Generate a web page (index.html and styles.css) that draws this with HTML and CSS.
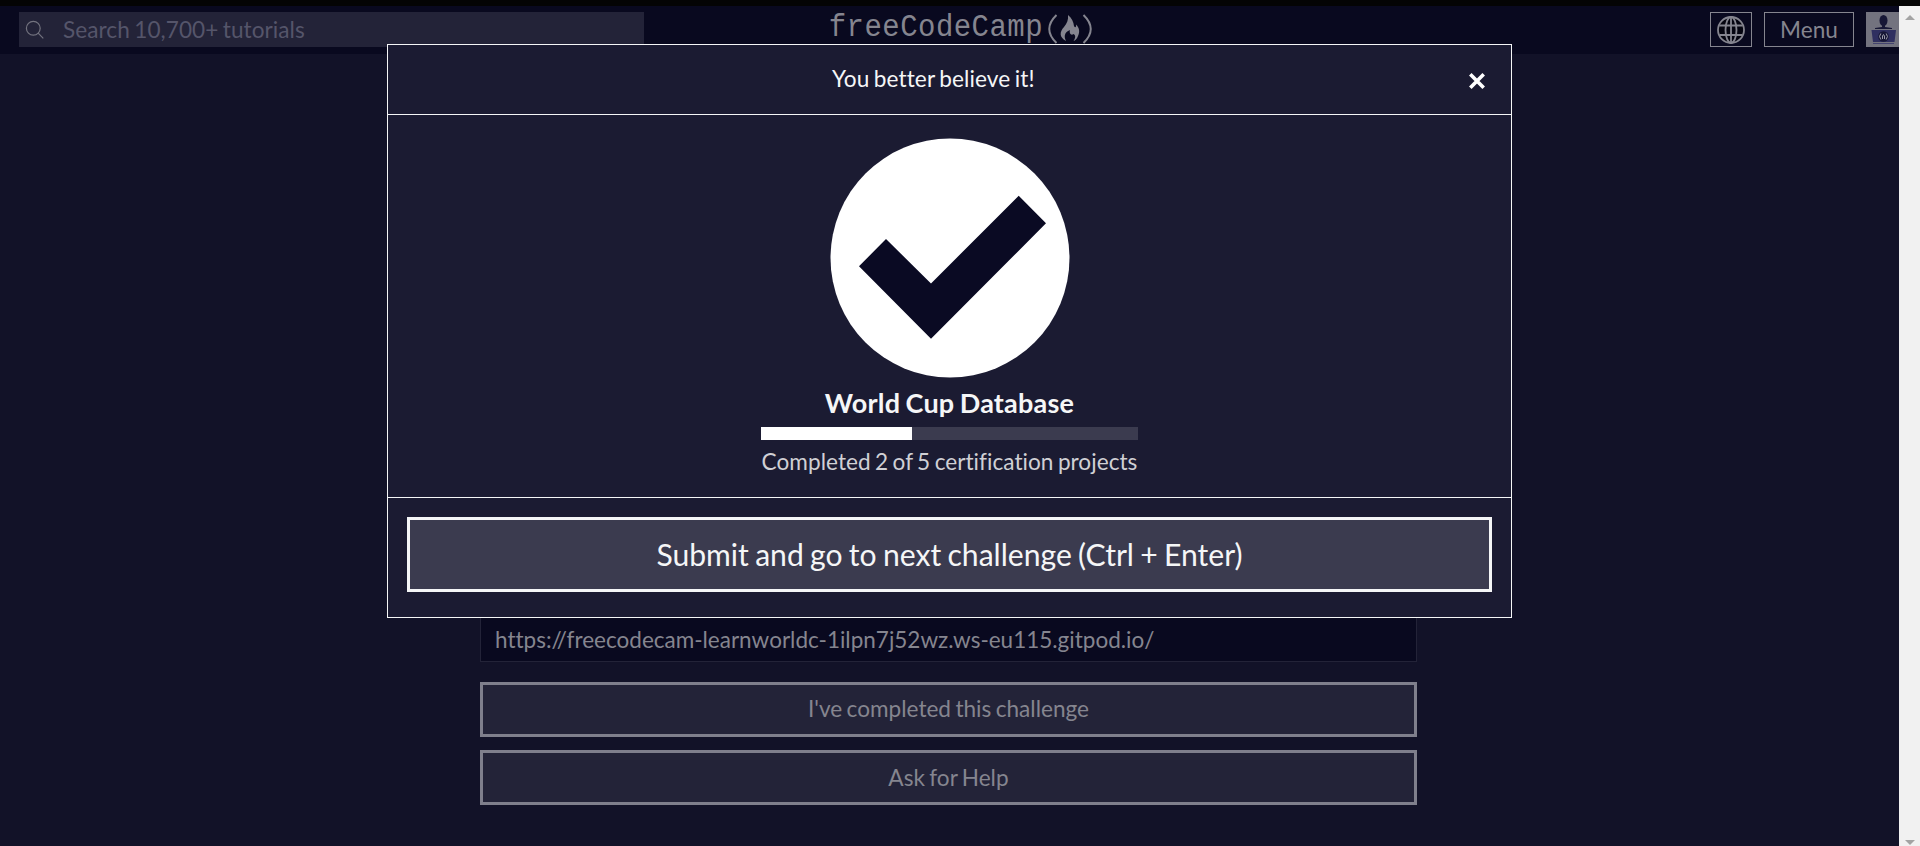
FILE: index.html
```html
<!DOCTYPE html>
<html lang="en">
<head>
<meta charset="utf-8">
<title>World Cup Database | freeCodeCamp.org</title>
<link rel="stylesheet" href="styles.css">
</head>
<body>
<div class="topline"></div>
<div class="viewport">
  <div class="page">
    <nav class="nav">
      <div class="search">
        <svg class="search-icon" width="20" height="20" viewBox="0 0 20 20"><circle cx="8.3" cy="8.3" r="6.9"/><path d="M13.2 13.2L18.3 18.3"/></svg>
        <span class="search-text">Search 10,700+ tutorials</span>
      </div>
      <div class="logo">
        <span class="logo-text">freeCodeCamp</span>
        <svg class="logo-mark" width="44" height="30" viewBox="0 0 44 30">
          <path class="paren" d="M8.500 1Q-6 15 8.500 29M35.500 1Q50 15 35.500 29"/>
          <path class="flame" d="M20 1C24 4 25.500 8 26 12C27 14 28.500 13.500 28 10.500C31.500 14 32 18 30 22C29 25 27 26.500 25.500 27C28 23.500 27.500 21 25.500 20C23 22 21 19 22 16C18 17.500 15 21 18 27C11 23 11.500 18 16 13C19 9.500 20.500 6 20 1Z"/>
        </svg>
      </div>
      <div class="actions">
        <div class="lang"><svg width="28" height="28" viewBox="0 0 28 28"><circle cx="14" cy="14" r="13"/><ellipse cx="14" cy="14" rx="5.500" ry="13"/><path d="M14 1V27M2.500 9.500H25.500M2.500 19H25.500"/></svg></div>
        <div class="menu">Menu</div>
        <div class="avatar"><svg width="33" height="35" viewBox="0 0 33 35">
          <ellipse class="person" cx="17.500" cy="8.500" rx="4" ry="5.500"/><path class="person" d="M16 13h3v2l7 1v1H9v-1l7-1z"/>
          <path class="laptop" d="M5.500 18H30L28.500 30H7Z"/><path class="base" d="M7 31.500H28"/><circle class="person" cx="17.500" cy="24.500" r="5.300"/><path class="mark" d="M14.800 21.500q-2.500 3 0 6M20.200 21.500q2.500 3 0 6M16.500 27v-3l1-1.500l1 1.500v3"/></svg></div>
      </div>
    </nav>
    <main class="content">
      <div class="field">https://freecodecam-learnworldc-1ilpn7j52wz.ws-eu115.gitpod.io/</div>
      <div class="btn btn-first">I've completed this challenge</div>
      <div class="btn">Ask for Help</div>
    </main>
    <section class="modal">
      <header class="modal-head"><span class="modal-title">You better believe it!</span>
        <svg class="close" width="18" height="18" viewBox="0 0 18 18"><path d="M2.300 2.300L15.700 15.700M15.700 2.300L2.300 15.700"/></svg></header>
      <div class="modal-body">
        <svg class="check" width="240" height="240" viewBox="0 0 240 240"><circle cx="120" cy="120" r="119.500"/><path d="M29 128.300L56 101L101 145.500L188.700 57.700L216 85.300L101 200.700Z"/></svg>
        <div class="project">World Cup Database</div>
        <div class="bar"><div class="fill" style="width:40%"></div></div>
        <div class="done">Completed 2 of 5 certi<span class="lig">fi</span>cation projects</div>
      </div>
      <footer class="modal-foot"><div class="submit">Submit and go to next challenge (Ctrl + Enter)</div></footer>
    </section>
  </div>
  <div class="scroll"><i class="up"></i><i class="down"></i></div>
</div>
</body>
</html>
```
FILE: styles.css
```css
* { box-sizing: border-box; }
body { margin: 0; height: 846px; overflow: hidden; display: flex; flex-direction: column; background: #121228; color: #85858f; font: 22.6px/34px Lato, sans-serif; font-variant-ligatures: none; word-spacing: -1.4px; }
svg { display: block; fill: none; }
.lig { font-variant-ligatures: normal; }
.topline { height: 6px; background: #040404; }
.viewport { flex: 1; display: flex; min-height: 0; }
.page { position: relative; width: 1899px; display: flex; flex-direction: column; justify-content: space-between; overflow: hidden; }
.nav { height: 48px; background: #09091f; display: grid; grid-template-columns: 625px 1fr 189px; padding: 6px 0 0 19px; }
.search { height: 35px; background: #232338; display: flex; align-items: center; padding-left: 6px; color: #55556a; }
.search-text { letter-spacing: .05px; }
.search-icon { stroke: #73737f; stroke-width: 1.2; margin-right: 18px; }
.logo { display: flex; justify-content: flex-end; padding-right: 618px; }
.logo-text { font: 29px/35px "Liberation Mono", monospace; letter-spacing: .45px; transform: scaleY(1.1); transform-origin: 0 80%; }
.logo-mark { margin: 2px 0 0 5px; }
.paren { stroke: #85858f; stroke-width: 2; }
.flame { fill: #85858f; }
.actions { display: flex; gap: 12px; }
.lang { width: 42px; height: 35px; border: 1px solid #85858f; display: grid; place-items: center; stroke: #85858f; stroke-width: 1.8; }
.lang circle { fill: #050510; }
.menu { width: 90px; height: 35px; border: 1px solid #85858f; text-align: center; line-height: 33px; }
.avatar { width: 33px; height: 35px; background: #73737f; }
.person { fill: #171736; }
.laptop { fill: #2f2f60; }
.base { stroke: #44446f; stroke-width: 1; }
.mark { stroke: #9a9aa8; stroke-width: 1; }
.content { width: 937px; margin: 0 0 41px 480px; display: flex; flex-direction: column; }
.field { height: 46px; margin-bottom: 20px; padding: 0 14px; font-size: 22.5px; line-height: 46px; background: #09091f; border: 1px solid #232338; }
.btn { height: 55px; border: 3px solid #7f7f8c; background: #232338; text-align: center; line-height: 49px; }
.btn-first { line-height: 47px; }
.btn + .btn { margin-top: 13px; }
.modal { position: absolute; left: 387px; top: 38px; width: 1125px; height: 574px; border: 1px solid #f5f6f7; background: #1b1b32; color: #f5f6f7; display: flex; flex-direction: column; }
.modal-head { height: 70px; border-bottom: 1px solid #f5f6f7; display: flex; justify-content: space-between; align-items: center; padding: 0 25px 0 444px; }
.modal-title { margin-top: -2px; letter-spacing: .1px; }
.close { stroke: #fff; stroke-width: 3.6; margin-top: 3px; }
.modal-body { height: 383px; border-bottom: 1px solid #f5f6f7; padding-top: 22.5px; display: flex; flex-direction: column; align-items: center; }
.check circle { fill: #fff; }
.check path { fill: #0a0a23; }
.project { font-size: 27px; font-weight: 700; line-height: 40px; margin-top: 5.500px; letter-spacing: .2px; }
.bar { width: 377px; height: 13px; background: #3b3b4f; margin-top: 4px; }
.fill { height: 100%; background: #fff; }
.done { color: #d0d0d5; margin-top: 5px; letter-spacing: .03px; }
.modal-foot { padding: 19px; }
.submit { height: 75px; border: 3px solid #f5f6f7; background: #3b3b4f; font-size: 30.1px; line-height: 68px; text-align: center; }
.scroll { width: 21px; background: #f1f1f1; display: flex; flex-direction: column; justify-content: space-between; align-items: center; padding: 9px 0 1px; }
.up, .down { border: 5px solid transparent; border-top: 0; border-bottom-color: #a3a3a3; }
.down { transform: rotate(180deg); }
```
